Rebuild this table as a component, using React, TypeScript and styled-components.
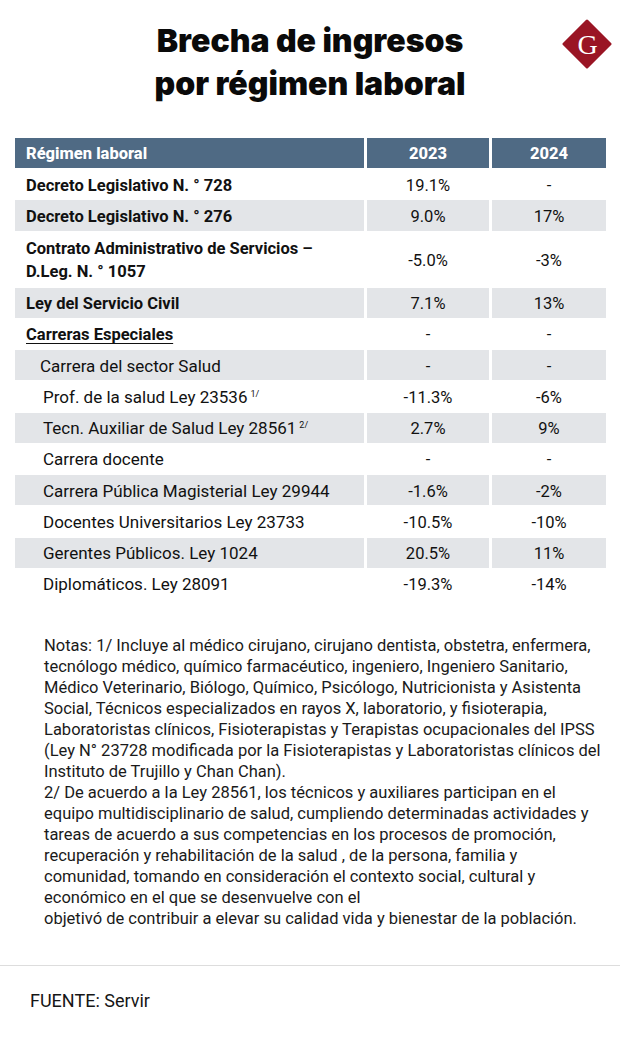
import React from "react";
import styled, { createGlobalStyle } from "styled-components";

const GlobalStyle = createGlobalStyle`
  body {
    margin: 0;
    background: #ffffff;
    font-family: Roboto, "Liberation Sans", sans-serif;
    color: #111111;
  }
`;

type Row = {
  label: string[];
  sup?: string;
  v2023: string;
  v2024: string;
  bold?: boolean;
  underline?: boolean;
  level?: number;
};

const rows: Row[] = [
  { label: ["Decreto Legislativo N. ° 728"], v2023: "19.1%", v2024: "-", bold: true },
  { label: ["Decreto Legislativo N. ° 276"], v2023: "9.0%", v2024: "17%", bold: true },
  {
    label: ["Contrato Administrativo de Servicios –", "D.Leg. N. ° 1057"],
    v2023: "-5.0%",
    v2024: "-3%",
    bold: true,
  },
  { label: ["Ley del Servicio Civil"], v2023: "7.1%", v2024: "13%", bold: true },
  { label: ["Carreras Especiales"], v2023: "-", v2024: "-", bold: true, underline: true },
  { label: ["Carrera del sector Salud"], v2023: "-", v2024: "-", level: 1 },
  { label: ["Prof. de la salud Ley 23536"], sup: "1/", v2023: "-11.3%", v2024: "-6%", level: 2 },
  { label: ["Tecn. Auxiliar de Salud Ley 28561"], sup: "2/", v2023: "2.7%", v2024: "9%", level: 2 },
  { label: ["Carrera docente"], v2023: "-", v2024: "-", level: 2 },
  { label: ["Carrera Pública Magisterial Ley 29944"], v2023: "-1.6%", v2024: "-2%", level: 2 },
  { label: ["Docentes Universitarios Ley 23733"], v2023: "-10.5%", v2024: "-10%", level: 2 },
  { label: ["Gerentes Públicos. Ley 1024"], v2023: "20.5%", v2024: "11%", level: 2 },
  { label: ["Diplomáticos. Ley 28091"], v2023: "-19.3%", v2024: "-14%", level: 2 },
];

const notes = [
  "Notas: 1/ Incluye al médico cirujano, cirujano dentista, obstetra, enfermera,",
  "tecnólogo médico, químico farmacéutico, ingeniero, Ingeniero Sanitario,",
  "Médico Veterinario, Biólogo, Químico, Psicólogo, Nutricionista y Asistenta",
  "Social, Técnicos especializados en rayos X, laboratorio, y fisioterapia,",
  "Laboratoristas clínicos, Fisioterapistas y Terapistas ocupacionales del IPSS",
  "(Ley N° 23728 modificada por la Fisioterapistas y Laboratoristas clínicos del",
  "Instituto de Trujillo y Chan Chan).",
  "2/ De acuerdo a la Ley 28561, los técnicos y auxiliares participan en el",
  "equipo multidisciplinario de salud, cumpliendo determinadas actividades y",
  "tareas de acuerdo a sus competencias en los procesos de promoción,",
  "recuperación y rehabilitación de la salud , de la persona, familia y",
  "comunidad, tomando en consideración el contexto social, cultural y",
  "económico en el que se desenvuelve con el",
  "objetivó de contribuir a elevar su calidad vida y bienestar de la población.",
];

function Logo() {
  return (
    <LogoBox>
      <svg width="50" height="50" viewBox="0 0 50 50">
        <polygon
          points="25,2 48,25 25,48 2,25"
          fill="#9a1524"
          stroke="#9a1524"
          strokeWidth="3"
          strokeLinejoin="round"
        />
        <text
          x="25.5"
          y="35"
          textAnchor="middle"
          fontFamily="'Liberation Serif', serif"
          fontSize="28"
          fill="#ffffff"
        >
          G
        </text>
      </svg>
    </LogoBox>
  );
}

export default function App() {
  return (
    <Page>
      <GlobalStyle />
      <Header>
        <span />
        <Title>
          Brecha de ingresos
          <br />
          por régimen laboral
        </Title>
        <Logo />
      </Header>

      <Table>
        <TableRow>
          <HeadCell $align="left">Régimen laboral</HeadCell>
          <HeadCell $align="center">2023</HeadCell>
          <HeadCell $align="center">2024</HeadCell>
        </TableRow>
        {rows.map((r, i) => (
          <TableRow key={i} $tall={r.label.length > 1}>
            <LabelCell
              $shaded={i % 2 === 1}
              $bold={!!r.bold}
              $underline={!!r.underline}
              $level={r.level || 0}
            >
              <LabelText>
                {r.label.map((l, j) => (
                  <span key={j}>
                    {l}
                    {r.sup && <Sup>{r.sup}</Sup>}
                  </span>
                ))}
              </LabelText>
            </LabelCell>
            <ValueCell $shaded={i % 2 === 1}>{r.v2023}</ValueCell>
            <ValueCell $shaded={i % 2 === 1}>{r.v2024}</ValueCell>
          </TableRow>
        ))}
      </Table>

      <Notes>
        {notes.map((n, i) => (
          <NoteLine key={i}>{n}</NoteLine>
        ))}
      </Notes>

      <Footer>FUENTE: Servir</Footer>
    </Page>
  );
}

const Page = styled.div`
  width: 620px;
  min-height: 1038px;
  background: #ffffff;
  display: flex;
  flex-direction: column;
`;

const Header = styled.header`
  display: grid;
  grid-template-columns: 1fr auto 1fr;
  align-items: start;
  padding: 19px 8px 0;
`;

const Title = styled.h1`
  margin: 0;
  padding-top: 0;
  font-family: Inter, Roboto, "Liberation Sans", sans-serif;
  font-weight: 900;
  font-size: 32px;
  line-height: 43.4px;
  letter-spacing: 0;
  text-align: center;
  color: #0a0a0a;
`;

const LogoBox = styled.div`
  justify-self: end;
  width: 50px;
  height: 50px;
`;

const Table = styled.div`
  margin: 32px 0 0 15px;
  display: flex;
  flex-direction: column;
  gap: 1px;
`;

const TableRow = styled.div<{ $tall?: boolean }>`
  display: grid;
  grid-template-columns: 349px 122px 114px;
  column-gap: 3px;
  height: ${(p) => (p.$tall ? "55px" : "30.25px")};
`;

const HeadCell = styled.div<{ $align: "left" | "center" }>`
  background: #4f6a84;
  color: #ffffff;
  font-weight: 800;
  font-size: 16.5px;
  display: flex;
  align-items: center;
  justify-content: ${(p) => (p.$align === "left" ? "flex-start" : "center")};
  padding: 1px 0 0 ${(p) => (p.$align === "left" ? "11px" : "0")};
`;

const LabelCell = styled.div<{
  $shaded: boolean;
  $bold: boolean;
  $underline: boolean;
  $level: number;
}>`
  background: ${(p) => (p.$shaded ? "#e3e5e8" : "#ffffff")};
  display: flex;
  align-items: center;
  padding: 2px 0 0 ${(p) => (p.$level === 2 ? 28 : p.$level === 1 ? 25 : 11)}px;
  font-size: ${(p) => (p.$bold ? "16.5px" : "17px")};
  font-weight: ${(p) => (p.$bold ? 700 : 400)};
  text-decoration: ${(p) => (p.$underline ? "underline" : "none")};
  text-underline-offset: 3px;
  text-decoration-thickness: 1px;
  color: #111111;
`;

const LabelText = styled.div`
  display: flex;
  flex-direction: column;
  line-height: 23.3px;
  white-space: nowrap;
`;

const Sup = styled.sup`
  font-size: 9px;
  vertical-align: 6px;
  line-height: 0;
  margin-left: 3px;
`;

const ValueCell = styled.div<{ $shaded: boolean }>`
  background: ${(p) => (p.$shaded ? "#e3e5e8" : "#ffffff")};
  display: flex;
  align-items: center;
  justify-content: center;
  padding-top: 2px;
  font-size: 16.5px;
  font-weight: 400;
  color: #111111;
`;

const Notes = styled.div`
  margin-top: 36px;
  padding-left: 44px;
  font-size: 16.5px;
  line-height: 21px;
  font-weight: 400;
  color: #1a1a1a;
  padding-bottom: 36px;
  border-bottom: 1px solid #dddddd;
`;

const NoteLine = styled.div`
  white-space: nowrap;
`;

const Footer = styled.footer`
  padding: 24px 0 0 30px;
  font-size: 18px;
  line-height: 21px;
  font-weight: 400;
  color: #161616;
`;
